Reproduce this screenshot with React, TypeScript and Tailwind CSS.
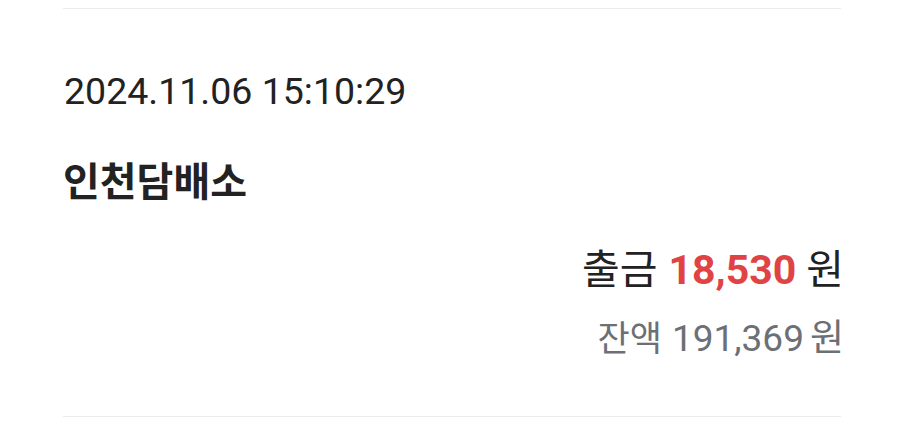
export default function App() {
  const font = { fontFamily: "Roboto, 'Noto Sans CJK KR', sans-serif" };
  return (
    <div className="w-[904px] h-[431px] bg-white overflow-hidden" style={font}>
      <div className="mx-[63px] pt-[8px]">
        <div className="h-px bg-[#ececec]" />
        <div className="flex flex-col pt-[59px] pb-[53px]">
          {/* 거래 일시 */}
          <div className="text-[37.5px] leading-[46px] text-[#222222] pl-px">2024.11.06 15:10:29</div>
          {/* 가맹점 */}
          <div className="mt-[45px] text-[40px] leading-[48px] font-bold text-[#222222]">인천담배소</div>
          {/* 금액 */}
          <div className="mt-[39px] -mr-[3px] flex items-baseline justify-end text-[41px] leading-[48px] text-[#222222]">
            <span>출금</span>
            <span className="ml-[11px] font-bold text-[#e04343]">18,530</span>
            <span className="ml-[10px]">원</span>
          </div>
          <div className="mt-[22px] -mr-[3px] flex items-baseline justify-end text-[37px] leading-[46px] text-[#6c7076]">
            <span className="text-[35px]">잔액</span>
            <span className="ml-[10px]">191,369</span>
            <span className="ml-[6px]">원</span>
          </div>
        </div>
        <div className="h-px bg-[#ececec]" />
      </div>
    </div>
  );
}
